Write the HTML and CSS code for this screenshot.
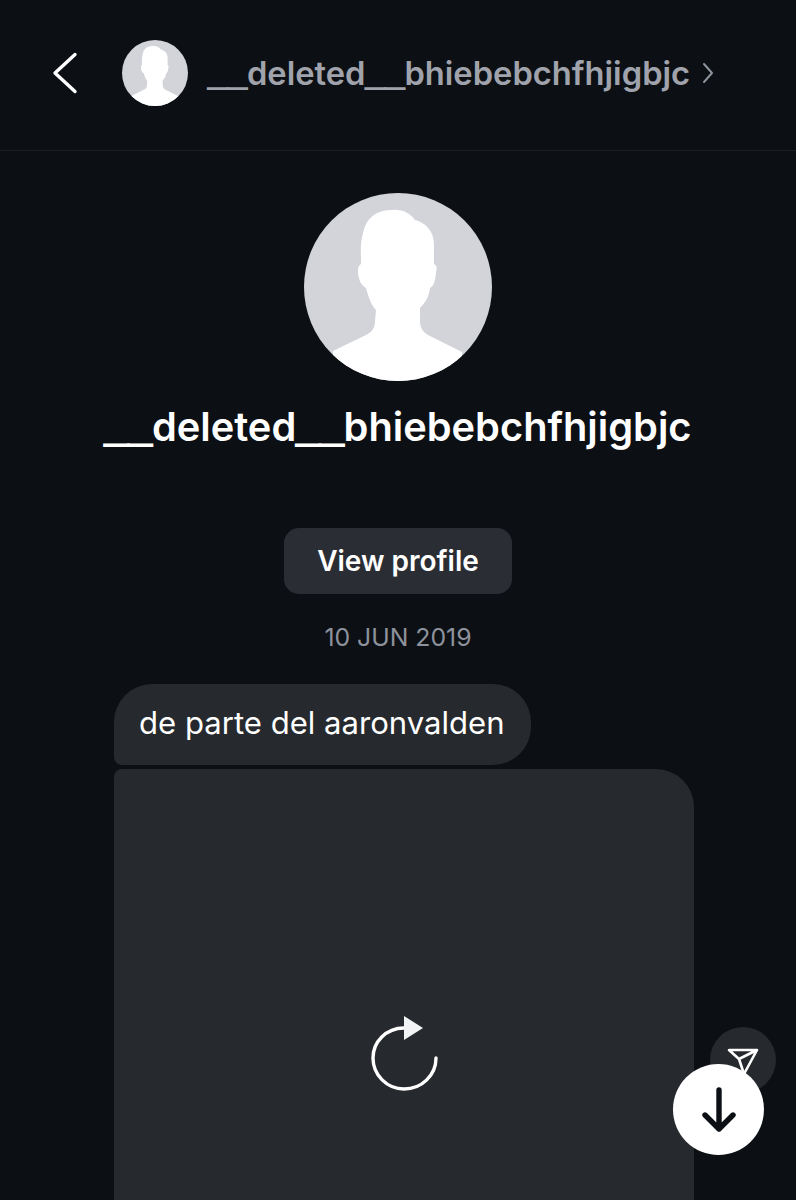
FILE: index.html
```html
<!DOCTYPE html>
<html lang="en">
<head>
    <meta charset="UTF-8">
    <meta name="viewport" content="width=device-width, initial-scale=1.0">
    <title>Chat</title>
    <link rel="stylesheet" href="styles.css">
</head>
<body>
    <div class="page">
        <header class="topbar">
            <svg class="back-icon" width="26" height="42" viewBox="0 0 26 42">
                <path d="M23 2.5 L3 21 L23 39.5" fill="none" stroke="#fff" stroke-width="3.4" stroke-linecap="round" stroke-linejoin="round"/>
            </svg>
            <svg class="avatar-small" viewBox="0 0 188 188">
                <use href="#person"/>
            </svg>
            <span class="topbar-name"><span class="rule">__</span>deleted<span class="rule">__</span>bhiebebchfhjigbjc</span>
            <svg class="more-icon" width="12" height="22" viewBox="0 0 12 22">
                <path d="M2 2 L10 11 L2 20" fill="none" stroke="#8e929c" stroke-width="2" stroke-linecap="round" stroke-linejoin="round"/>
            </svg>
        </header>

        <section class="intro">
            <svg class="avatar-large" viewBox="0 0 188 188">
                <defs>
                    <clipPath id="round"><circle cx="94" cy="94" r="94"/></clipPath>
                    <g id="person" clip-path="url(#round)">
                        <rect width="188" height="188" fill="#d2d4d9"/>
                        <path d="M29 158 L62 142 C68 139 71 135 71 128 L72 117 C68 113 65 106 62 95 C57 92 54 86 54 78 C54 74 55 72 57 71 C57 60 56 50 59 40 C62 25 72 17 88 17 C98 16 106 20 111 27 C122 30 130 38 130 52 L130 71 C133 72 133 75 132 80 C131 88 130 93 126 95 C125 104 121 110 116 115 L116 128 C116 135 119 139 124 142 L158 159 L158 188 L29 188 Z" fill="#fff"/>
                    </g>
                </defs>
                <use href="#person"/>
            </svg>
            <h1 class="intro-name"><span class="rule">__</span>deleted<span class="rule">__</span>bhiebebchfhjigbjc</h1>
            <button class="profile-btn">View profile</button>
            <div class="date">10 JUN 2019</div>
        </section>

        <section class="messages">
            <div class="bubble">de parte del aaronvalden</div>
            <div class="media">
                <svg class="reload-icon" width="68" height="76" viewBox="0 0 68 76">
                    <path d="M33 13 C15 13 2 27 2 43 C2 60 16 74 33 74 C51 74 65 60 65 43" fill="none" stroke="#fff" stroke-width="3.4" stroke-linecap="round"/>
                    <path d="M33 1 L52 13 L33 25 Z" fill="#f2f3f5"/>
                </svg>
            </div>
        </section>

        <div class="share-btn">
            <svg width="32" height="28" viewBox="0 0 32 28">
                <path d="M2 2 L30 2 L17 26 L12 11 Z M2 2 L12 11 M30 2 L12 11" fill="none" stroke="#fff" stroke-width="2.6" stroke-linejoin="round"/>
            </svg>
        </div>
        <div class="scroll-btn">
            <svg width="34" height="46" viewBox="0 0 34 46">
                <path d="M17 3 L17 42 M3 28 L17 42 L31 28" fill="none" stroke="#0c1014" stroke-width="5.4" stroke-linecap="round" stroke-linejoin="round"/>
            </svg>
        </div>
    </div>
</body>
</html>
```

FILE: styles.css
```css
html, body {
    margin: 0;
    padding: 0;
    background-color: #0c1014;
}
body {
    font-family: Inter, "Liberation Sans", sans-serif;
    color: #fff;
}
.page {
    position: relative;
    width: 796px;
    height: 1200px;
    overflow: hidden;
}
.topbar {
    display: flex;
    align-items: center;
    height: 151px;
    padding: 0 0 5px 52px;
    box-sizing: border-box;
    border-bottom: 1px solid #1c2025;
}
.avatar-small {
    width: 66px;
    height: 66px;
    margin-left: 44px;
}
.topbar-name {
    margin-left: 20px;
    font-size: 32.7px;
    font-weight: 600;
    color: #a0a3ac;
    white-space: nowrap;
}
/* the underscores run wider and heavier than Inter draws them */
.rule {
    font-family: "Liberation Sans", sans-serif;
    font-size: 1.07em;
    font-weight: 700;
    line-height: 0;
    -webkit-text-stroke: 0.045em currentColor;
}
.more-icon {
    margin-left: 12px;
}
.intro {
    display: flex;
    flex-direction: column;
    align-items: center;
}
.avatar-large {
    width: 188px;
    height: 188px;
    margin-top: 42px;
}
.intro-name {
    margin: 22px 0 0;
    font-size: 39.8px;
    line-height: 48px;
    font-weight: 600;
    white-space: nowrap;
}
.profile-btn {
    width: 228px;
    height: 66px;
    margin-top: 77px;
    border: none;
    border-radius: 15px;
    background-color: #2a2d33;
    color: #fff;
    font-family: inherit;
    font-size: 28px;
    font-weight: 600;
}
.date {
    margin-top: 28px;
    font-size: 24.8px;
    line-height: 30px;
    color: #8e929c;
}
.messages {
    display: flex;
    flex-direction: column;
    align-items: flex-start;
    gap: 4px;
    margin-top: 32px;
    padding-left: 114px;
}
.bubble {
    height: 81px;
    padding: 0 26px 0 25px;
    box-sizing: border-box;
    border-radius: 38px 38px 38px 8px;
    background-color: #26292e;
    font-size: 31.1px;
    line-height: 78px;
}
.media {
    display: flex;
    justify-content: center;
    width: 580px;
    height: 440px;
    border-radius: 8px 38px 0 0;
    background-color: #26292e;
}
.reload-icon {
    margin-top: 246px;
    margin-left: 1px;
}
.share-btn {
    position: absolute;
    left: 710px;
    top: 1027px;
    width: 66px;
    height: 66px;
    border-radius: 50%;
    background-color: #26292e;
    display: flex;
    justify-content: center;
    padding-top: 21px;
    box-sizing: border-box;
}
.scroll-btn {
    position: absolute;
    left: 673px;
    top: 1064px;
    width: 91px;
    height: 91px;
    border-radius: 50%;
    background-color: #fff;
    display: flex;
    align-items: center;
    justify-content: center;
}
```
